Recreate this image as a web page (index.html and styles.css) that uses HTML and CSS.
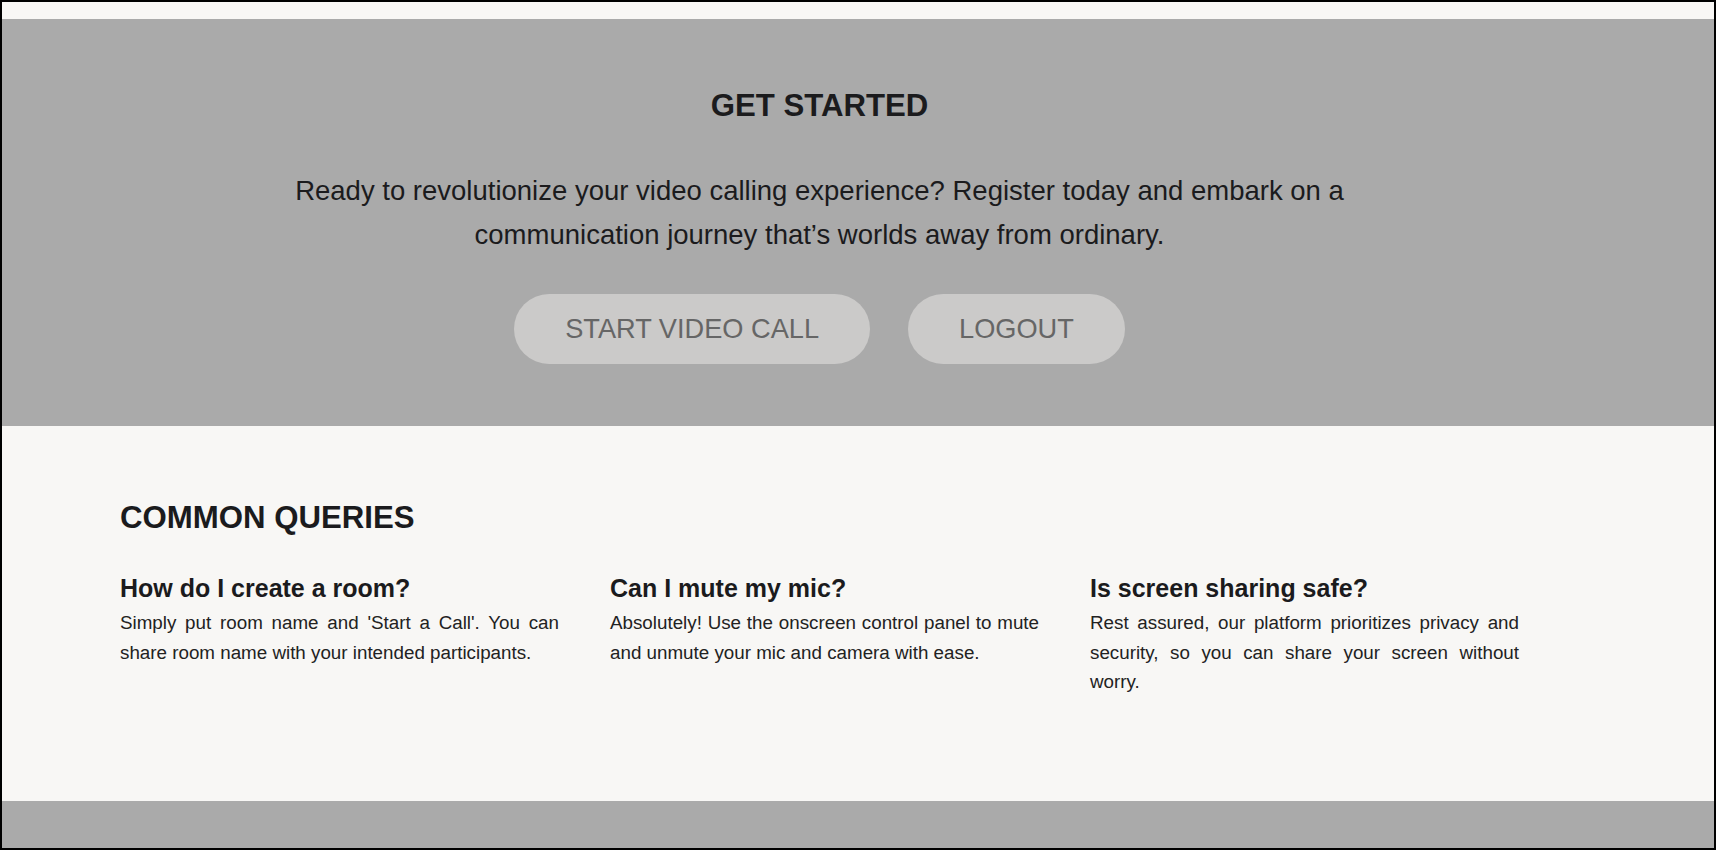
FILE: index.html
```html
<!DOCTYPE html>
<html lang="en">
<head>
<meta charset="utf-8">
<title>Get Started</title>
<link rel="stylesheet" href="styles.css">
</head>
<body>
<div class="page">
  <div class="topbar"></div>
  <section class="hero">
    <div class="hero-inner">
      <h2 class="hero-title">GET STARTED</h2>
      <p class="hero-text">Ready to revolutionize your video calling experience? Register today and embark on a communication journey that’s worlds away from ordinary.</p>
      <div class="hero-actions">
        <button class="pill">START VIDEO CALL</button>
        <button class="pill">LOGOUT</button>
      </div>
    </div>
  </section>
  <section class="faq">
    <h2 class="faq-title">COMMON QUERIES</h2>
    <div class="faq-grid">
      <div class="faq-item">
        <h3 class="faq-q">How do I create a room?</h3>
        <p class="faq-a">Simply put room name and 'Start a Call'. You can share room name with your intended participants.</p>
      </div>
      <div class="faq-item">
        <h3 class="faq-q">Can I mute my mic?</h3>
        <p class="faq-a">Absolutely! Use the onscreen control panel to mute and unmute your mic and camera with ease.</p>
      </div>
      <div class="faq-item">
        <h3 class="faq-q">Is screen sharing safe?</h3>
        <p class="faq-a">Rest assured, our platform prioritizes privacy and security, so you can share your screen without worry.</p>
      </div>
    </div>
  </section>
  <footer class="footer"></footer>
</div>
</body>
</html>
```
FILE: styles.css
```css
* { box-sizing: border-box; }
html, body { margin: 0; padding: 0; }
body {
  font-family: "Liberation Sans", Arial, sans-serif;
  color: #1b1b1d;
  background: #000;
}
.page {
  width: 1716px;
  height: 850px;
  border: 2px solid #000;
  background: #f8f7f5;
  overflow: hidden;
}
.topbar {
  height: 17px;
  background: #f8f7f5;
}
.hero {
  background: #aaaaaa;
  height: 407px;
  padding: 69px 77px 0 0;
}
.hero-inner {
  display: flex;
  flex-direction: column;
  align-items: center;
}
.hero-title {
  margin: 0;
  font-size: 31.2px;
  font-weight: 700;
  line-height: 35px;
}
.hero-text {
  margin: 46px 0 0;
  max-width: 1090px;
  text-align: center;
  font-size: 27.5px;
  line-height: 43.5px;
}
.hero-actions {
  display: flex;
  gap: 38px;
  margin-top: 38px;
}
.pill {
  font-family: "Liberation Sans", Arial, sans-serif;
  font-size: 27.2px;
  line-height: 32px;
  color: #666666;
  background: #cbcac9;
  border: none;
  border-radius: 35px;
  padding: 19px 51px;
  height: 70px;
}
.faq {
  height: 375px;
  padding: 74px 0 0 118px;
}
.faq-title {
  margin: 0;
  font-size: 31.2px;
  font-weight: 700;
  line-height: 35px;
}
.faq-grid {
  display: grid;
  grid-template-columns: 439px 429px 429px;
  column-gap: 51px;
  margin-top: 39px;
}
.faq-q {
  margin: 0;
  font-size: 25px;
  font-weight: 700;
  line-height: 29px;
}
.faq-a {
  margin: 5px 0 0;
  font-size: 18.8px;
  line-height: 29.5px;
  text-align: justify;
  color: #222222;
}
.footer {
  height: 60px;
  background: #aaaaaa;
}
```
